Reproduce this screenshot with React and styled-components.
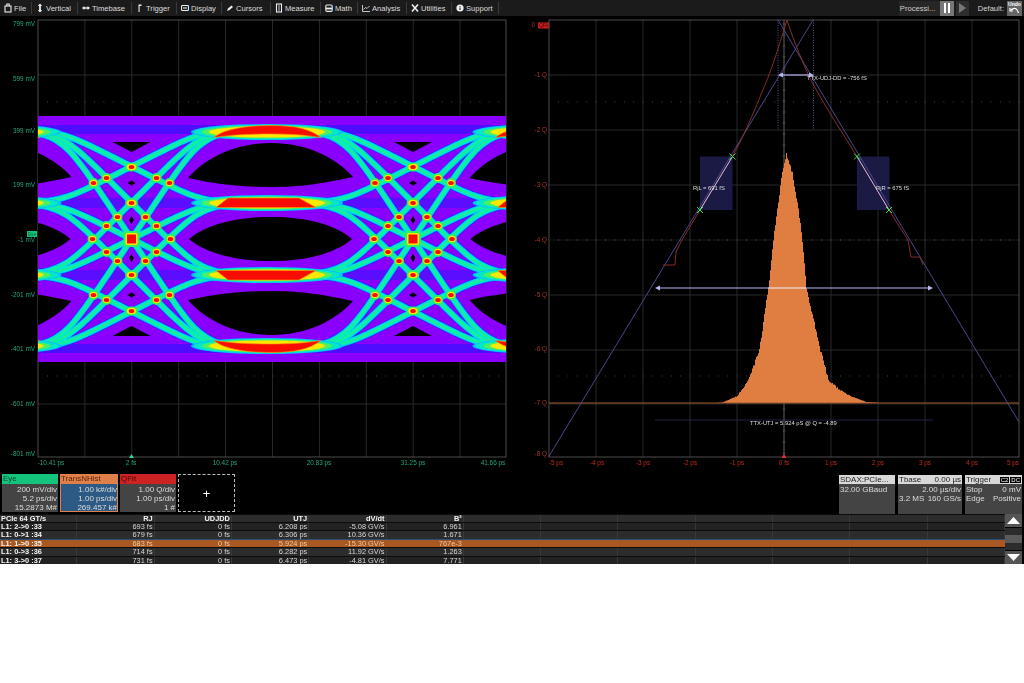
import React from "react";
import styled, { createGlobalStyle } from "styled-components";

const GlobalStyle = createGlobalStyle`
  html, body { margin: 0; padding: 0; background: #fff; }
  body { font-family: "Liberation Sans", Arial, sans-serif; }
`;

const Scope = styled.div`
  width: 1024px;
  height: 564px;
  background: #000;
  display: flex;
  flex-direction: column;
  overflow: hidden;
`;

const Toolbar = styled.div`
  height: 16px;
  background: #1b1b1b;
  display: flex;
  align-items: center;
  color: #dedede;
  font-size: 7.6px;
`;

const Menu = styled.div`
  display: flex;
  align-items: center;
  height: 16px;
`;

const MenuItem = styled.div`
  width: ${(p) => p.$w}px;
  height: 12px;
  box-sizing: border-box;
  display: flex;
  align-items: center;
  gap: 2px;
  padding-left: 4px;
  border-right: 1px solid #3a3a3a;
  white-space: nowrap;
`;

const ToolbarRight = styled.div`
  margin-left: auto;
  display: flex;
  align-items: center;
  height: 16px;
  padding-right: 2px;
`;

const Status = styled.div`
  width: 40px;
  padding-left: 1px;
  height: 15px;
  line-height: 15px;
  background: #262626;
  color: #cfcfcf;
`;

const RunButton = styled.div`
  width: ${(p) => p.$w}px;
  height: 15px;
  margin-right: 2px;
  background: ${(p) => p.$bg};
  display: flex;
  align-items: center;
  justify-content: center;
`;

const DefaultLabel = styled.div`
  margin: 0 3px 0 7px;
  color: #d8d8d8;
`;

const UndoButton = styled.div`
  width: 15px;
  height: 15px;
  background: #666;
  color: #fff;
  font-size: 5px;
  font-weight: bold;
  text-align: center;
  line-height: 6px;
  display: flex;
  flex-direction: column;
  align-items: center;
`;

const Charts = styled.div`
  height: 456px;
  display: flex;
`;

const ChartSvg = styled.svg`
  display: block;
  width: 512px;
  height: 456px;
  font-family: "Liberation Sans", Arial, sans-serif;
`;

const Descriptors = styled.div`
  height: 42px;
  box-sizing: border-box;
  padding-top: 2px;
  display: flex;
  font-size: 8px;
`;

const TraceBoxes = styled.div`
  display: flex;
  gap: 2px;
  padding-left: 2px;
  height: 38px;
`;

const TraceBox = styled.div`
  width: ${(p) => p.$w}px;
  display: flex;
  flex-direction: column;
  background: ${(p) => p.$body || "#444"};
  box-shadow: ${(p) => (p.$body ? `0 0 0 1px ${p.$head} inset` : "none")};
`;

const TraceHead = styled.div`
  height: 10px;
  line-height: 10px;
  padding-left: 1px;
  background: ${(p) => p.$color};
  color: ${(p) => p.$text};
  font-size: 8px;
`;

const TraceLine = styled.div`
  height: 9px;
  line-height: 9px;
  padding-right: 1px;
  margin-top: ${(p) => (p.$first ? 1 : 0)}px;
  text-align: right;
  color: #dcdcdc;
`;

const AddBox = styled.div`
  width: 57px;
  box-sizing: border-box;
  border: 1px dashed #bbb;
  display: flex;
  align-items: center;
  justify-content: center;
  color: #fff;
  font-size: 13px;
`;

const Timing = styled.div`
  margin-left: auto;
  margin-right: 2px;
  display: flex;
  gap: 3px;
  height: 39px;
  margin-top: 1px;
`;

const TimingBox = styled.div`
  width: ${(p) => p.$w}px;
  background: #444;
  color: #dcdcdc;
`;

const TimingHead = styled.div`
  height: 9px;
  line-height: 9px;
  padding: 0 1px;
  display: flex;
  justify-content: space-between;
  align-items: center;
  background: #d8d8d8;
  color: #222;
`;

const TimingLine = styled.div`
  height: 9px;
  line-height: 9px;
  padding: 0 1px;
  display: flex;
  justify-content: ${(p) => p.$align || "space-between"};
  margin-top: ${(p) => (p.$first ? 1 : 0)}px;
`;

const Badge = styled.span`
  background: #000;
  color: #fff;
  font-size: 6px;
  line-height: 7px;
  padding: 0 1px;
  margin-left: 1px;
`;

const TableWrap = styled.div`
  height: 50px;
  display: flex;
  font-size: 7.4px;
`;

const Table = styled.div`
  width: 1005px;
`;

const Row = styled.div`
  display: grid;
  grid-template-columns: repeat(13, 1fr);
  height: ${(p) => p.$h || 8.4}px;
  line-height: ${(p) => p.$h || 8.4}px;
  background: ${(p) => (p.$selected ? "#a85820" : p.$alt ? "#2c2c2c" : "#222")};
  color: ${(p) => (p.$selected ? "#eec9a8" : "#d6d6d6")};
  border-top: 1px solid ${(p) => (p.$selected ? "#28507a" : "#0c0c0c")};
  box-sizing: border-box;
  font-weight: ${(p) => (p.$head ? "bold" : "normal")};
`;

const Cell = styled.div`
  text-align: ${(p) => (p.$name ? "left" : "right")};
  padding: 0 1px;
  color: ${(p) => (p.$name || p.$head ? "#f4f4f4" : "inherit")};
  font-weight: ${(p) => (p.$name ? "bold" : "inherit")};
  border-right: 1px solid ${(p) => (p.$selected ? "transparent" : "#383838")};
  white-space: nowrap;
  overflow: hidden;
`;

const ScrollBar = styled.div`
  width: 17px;
  margin-right: 2px;
  height: 50px;
  background: #222;
  display: flex;
  flex-direction: column;
  align-items: stretch;
`;

const ScrollArrow = styled.div`
  height: 13px;
  background: #555;
  display: flex;
  align-items: center;
  justify-content: center;
`;

const ScrollTrack = styled.div`
  flex: 1;
  display: flex;
  align-items: center;
  background: #2c2c2c;
  border-top: 1px solid #000;
  border-bottom: 1px solid #000;
`;

const ScrollThumb = styled.div`
  width: 100%;
  height: 8px;
  background: #5a5a5a;
`;

// toolbar glyphs, 8x10 box
const Icon = ({ children }) => (
  <svg width="8" height="10" viewBox="0 0 8 10" fill="none" stroke="#eee" strokeWidth="1.1">
    {children}
  </svg>
);

const icons = {
  file: (<><rect x="1" y="3" width="6" height="6" /><path d="M2.8 3V1h2.4v2" /></>),
  vertical: <path d="M4 0.5L6.2 3H4.9V7H6.2L4 9.5 1.8 7H3.1V3H1.8Z" fill="#eee" stroke="none" />,
  timebase: <path d="M0 5L2.4 3V4.3H5.6V3L8 5 5.6 7V5.7H2.4V7Z" fill="#eee" stroke="none" />,
  trigger: <path d="M2.5 9V1.5H5.5V3H3.6V9Z" fill="#eee" stroke="none" />,
  display: (<><rect x="0.5" y="2.5" width="7" height="5" rx="1" /><path d="M2 5H6" /></>),
  cursors: <path d="M1 8L2 5.5 5.5 2.5 7 4 3.5 7Z" fill="#eee" stroke="none" />,
  measure: (<><rect x="1.5" y="1" width="5" height="8" /><path d="M3 3H5M3 5H5M3 7H5" strokeWidth="0.8" /></>),
  math: (<><rect x="0.8" y="2" width="6.4" height="6.4" rx="1.2" /><path d="M1 5.5H7" strokeWidth="1.8" /></>),
  analysis: (<><path d="M0.5 2V8.5H8" strokeWidth="0.8" /><path d="M1.5 6.5L3.5 4.5 5 5.5 7.5 3" strokeWidth="0.8" /></>),
  utilities: <path d="M1 1.5L7 8.5M7 1.5L1 8.5" strokeWidth="1.6" />,
  support: (<><circle cx="4" cy="5" r="3.6" fill="#eee" stroke="none" /><path d="M4 4.4V7M4 3V3.8" stroke="#1b1b1b" strokeWidth="1" /></>),
};

const menu = [
  ["File", "file", 32],
  ["Vertical", "vertical", 46],
  ["Timebase", "timebase", 54],
  ["Trigger", "trigger", 45],
  ["Display", "display", 45],
  ["Cursors", "cursors", 49],
  ["Measure", "measure", 50],
  ["Math", "math", 37],
  ["Analysis", "analysis", 49],
  ["Utilities", "utilities", 45],
  ["Support", "support", 47],
];

const HLINES = [20, 75, 130, 185, 240, 295, 350, 404, 457];

function Grid({ x0, x1, step, color = "#2e2e2e", border = "#555" }) {
  const verts = [];
  for (let x = x0 + step; x < x1 - 2; x += step) verts.push(x);
  const dots = [];
  for (let x = x0 + 9; x < x1; x += 9.4) dots.push(x);
  return (
    <g>
      {verts.map((x) => (
        <line key={x} x1={x} x2={x} y1={20} y2={457} stroke={color} strokeWidth="0.9" />
      ))}
      {HLINES.slice(1, -1).map((y) => (
        <line key={y} x1={x0} x2={x1} y1={y} y2={y} stroke={y === 240 ? "#1c1c1c" : color} strokeWidth="0.9" />
      ))}
      {[102, 240, 376].map((y) =>
        dots.map((x) => (
          <rect key={y + "-" + x} x={x} y={y - 0.5} width="1" height="1" fill={y === 240 ? "#5c5c5c" : "#444"} />
        ))
      )}
      <rect x={x0} y={20} width={x1 - x0} height={437} fill="none" stroke={border} strokeWidth="0.9" />
    </g>
  );
}

// eye diagram: every level-to-level transition around each crossing
const LEVELS = [130, 203, 275, 348];
const UI = 281.5;
const CROSSES = [-150, 131.5, 413, 694.5];

// nearly straight through the crossing, then a soft bend on to the level
function settle(t) {
  const u = Math.abs(t);
  const a = 1.95 * u;
  const b = 0.97 + 0.03 * Math.sin((Math.max(0, u - 0.5) / 0.5) * (Math.PI / 2));
  const s = 7;
  return Math.sign(t) * (-Math.log(Math.exp(-s * a) + Math.exp(-s * b)) / s);
}

function transition(a, b, cx) {
  const pts = [];
  for (let i = -40; i <= 40; i++) {
    const t = i / 40;
    const y = (a + b) / 2 + ((b - a) / 2) * settle(t);
    pts.push(`${(cx + (t * UI) / 2).toFixed(1)} ${y.toFixed(1)}`);
  }
  return "M" + pts.join("L");
}

const edgePaths = [];
CROSSES.forEach((cx) =>
  LEVELS.forEach((a) =>
    LEVELS.forEach((b) => {
      if (a !== b) edgePaths.push(transition(a, b, cx));
    })
  )
);
const edges = edgePaths.join(" ");

const edgeLayers = [
  ["#2a20ff", 7.6],
  ["#00b4ff", 6.4],
  ["#00e8d0", 5],
  ["#18f090", 2],
];

const nodeOffsets = [
  [0, -72], [0, -36], [0, 36], [0, 72],
  [-25, -61], [25, -61], [-38, -56], [38, -56],
  [-14, -22], [14, -22], [-25, -13], [25, -13],
  [-14, 22], [14, 22], [-25, 13], [25, 13],
  [-25, 61], [25, 61], [-38, 56], [38, 56],
  [-39, 0], [39, 0],
];

const TOP_BAR = "M214 137.500C225 128 250 125.500 272 125.500C295 125.500 310 129 321 137.500C305 135 290 134 270 134C250 134 230 135 214 137.500Z";
const MID_BAR = "M216 207.500L228 198H299L316 207.500Z";

// the three eye openings, left to right tips one unit interval apart
const TOP_EYE = "M188 178C205 158 235 143 271 143C308 143 336 158 353 177C320 184 300 187 271 187C240 187 215 184 188 178Z";
const MID_EYE = "M189 239C205 225 235 217 271 217C308 217 336 225 352 239C336 253 308 261 271 261C235 261 205 253 189 239Z";

function LevelBar({ d, y }) {
  return (
    <g>
      <ellipse cx="267" cy={y} rx="76" ry="8" fill="#00c0ff" />
      <ellipse cx="267" cy={y} rx="73" ry="7.2" fill="#00e8c8" />
      <ellipse cx="267" cy={y} rx="65" ry="6.4" fill="#50f060" />
      <ellipse cx="267" cy={y} rx="58" ry="5.6" fill="#ffe800" />
      <path d={d} fill="#f81000" stroke="#ff9000" strokeWidth="0.6" strokeLinejoin="round" />
    </g>
  );
}

const Hole = ({ cx, y, rx, ry }) => (
  <path d={`M${cx - rx} ${y}L${cx} ${y - ry}L${cx + rx} ${y}L${cx} ${y + ry}Z`} fill="#000" />
);

function EyePattern() {
  return (
    <svg x="38" y="20" width="468" height="437" viewBox="38 20 468 437">
      <defs>
        <filter id="soft" x="-5%" y="-5%" width="110%" height="110%">
          <feGaussianBlur stdDeviation="0.6" />
        </filter>
      </defs>
      <g filter="url(#soft)">
        <rect x="30" y="116" width="490" height="246" fill="#8a00ff" />
        <rect x="30" y="125" width="490" height="9" fill="#5010ff" />
        <rect x="30" y="344" width="490" height="9" fill="#5010ff" />
        <rect x="30" y="198" width="490" height="10" fill="#5a08ff" />
        <rect x="30" y="270" width="490" height="10" fill="#5a08ff" />
        {[-281.5, 0, 281.5].map((dx) => (
          <g key={dx} transform={`translate(${dx} 0)`}>
            <path d={TOP_EYE} fill="#000" />
            <path d={MID_EYE} fill="#000" />
            <path d={TOP_EYE} fill="#000" transform="translate(0 478) scale(1 -1)" />
          </g>
        ))}
        {[131.5, 413].map((cx) => (
          <g key={cx}>
            <path d={`M${cx - 19} 142H${cx + 19}L${cx} 152Z`} fill="#000" />
            <path d={`M${cx - 19} 336H${cx + 19}L${cx} 326Z`} fill="#000" />
            <Hole cx={cx} y={183} rx={4} ry={2.4} />
            <Hole cx={cx} y={295} rx={4} ry={2.4} />
            <Hole cx={cx} y={220} rx={2.4} ry={4} />
            <Hole cx={cx} y={258} rx={2.4} ry={4} />
          </g>
        ))}
        {edgeLayers.map(([color, w]) => (
          <path key={color} d={edges} fill="none" stroke={color} strokeWidth={w} />
        ))}
        {[-281.5, 0, 281.5].map((dx) => (
          <g key={dx} transform={`translate(${dx} 0)`}>
            <LevelBar d={TOP_BAR} y={132} />
            <LevelBar d={MID_BAR} y={203} />
            <g transform="translate(0 478) scale(1 -1)">
              <LevelBar d={TOP_BAR} y={132} />
              <LevelBar d={MID_BAR} y={203} />
            </g>
          </g>
        ))}
        {[131.5, 413].map((cx) => (
          <g key={cx}>
            {nodeOffsets.map(([dx, dy]) => (
              <g key={dx + "," + dy}>
                <ellipse cx={cx + dx} cy={239 + dy} rx={dx === 0 ? 6.4 : 5} ry={dx === 0 && Math.abs(dy) === 72 ? 4.5 : 5} fill="#30ee60" />
                <ellipse cx={cx + dx} cy={239 + dy} rx={dx === 0 ? 4.6 : 3.6} ry={3.2} fill="#ffe800" />
                <ellipse cx={cx + dx} cy={239 + dy} rx="2.8" ry="2" fill="#f81000" />
              </g>
            ))}
            <rect x={cx - 8} y={231} width={16} height={16} fill="#30ee60" rx="3" />
            <rect x={cx - 6} y={233} width={12} height={12} fill="#ffe800" rx="2" />
            <rect x={cx - 4.5} y={234.500} width={9} height={9} fill="#f81000" />
          </g>
        ))}
      </g>
    </svg>
  );
}

const yLabels = [
  ["799 mV", 26], ["599 mV", 81], ["399 mV", 133], ["199 mV", 187], ["-1 mV", 242],
  ["-201 mV", 297], ["-401 mV", 351], ["-601 mV", 406], ["-801 mV", 456],
];
const xLabels = [
  ["-10.41 ps", 51], ["2 fs", 131], ["10.42 ps", 225], ["20.83 ps", 319], ["31.25 ps", 413], ["41.66 ps", 493],
];

function EyeChart() {
  return (
    <ChartSvg viewBox="0 16 512 456">
      <Grid x0={38} x1={506} step={46.9} />
      <EyePattern />
      {yLabels.map(([t, y]) => (
        <text key={t} x="35" y={y} fontSize="6.4" fill="#22a87a" textAnchor="end">{t}</text>
      ))}
      {xLabels.map(([t, x]) => (
        <text key={t} x={x} y="465" fontSize="6.4" fill="#22a87a" textAnchor="middle">{t}</text>
      ))}
      <path d="M131.5 454L134 458H129Z" fill="#2fd49a" />
      <rect x="27" y="231" width="10" height="6" fill="#14c47c" />
      <text x="32" y="236" fontSize="4.6" fill="#063" textAnchor="middle">Eye</text>
    </ChartSvg>
  );
}

// histogram outline, px column -> top y
const histProfile = [
  [715, 403], [722, 402.5], [737, 396], [748, 380], [759, 350], [768, 288], [773, 240], [777, 210],
  [782, 172], [786, 155], [788, 162], [792, 172], [798, 210], [802, 240], [806, 288], [820, 350],
  [828, 380], [838, 389], [850, 396], [866, 402], [880, 403],
];

function histTop(x) {
  for (let i = 1; i < histProfile.length; i++) {
    const [x0, y0] = histProfile[i - 1];
    const [x1, y1] = histProfile[i];
    if (x <= x1) {
      const y = y0 + ((y1 - y0) * (x - x0)) / (x1 - x0);
      const jitter = Math.sin(x * 12.9898) * 43758.5453;
      const n = jitter - Math.floor(jitter) - 0.5;
      return Math.min(403, y + n * Math.min(4, (403 - y) * 0.12));
    }
  }
  return 403;
}

function histPath() {
  let d = "M715 403";
  for (let x = 715; x < 880; x += 1) {
    d += `V${histTop(x).toFixed(1)}H${x + 1}`;
  }
  return d + "V403Z";
}

const qLabels = [
  ["0", 27], ["-1 Q", 77], ["-2 Q", 132], ["-3 Q", 187], ["-4 Q", 242], ["-5 Q", 297], ["-6 Q", 351], ["-7 Q", 405], ["-8 Q", 456],
];
const psLabels = [
  ["-5 ps", 556], ["-4 ps", 597], ["-3 ps", 643], ["-2 ps", 690], ["-1 ps", 737], ["0 fs", 784],
  ["1 ps", 831], ["2 ps", 878], ["3 ps", 925], ["4 ps", 972], ["5 ps", 1013],
];

const Cross = ({ x, y }) => (
  <path d={`M${x - 3} ${y - 3}L${x + 3} ${y + 3}M${x + 3} ${y - 3}L${x - 3} ${y + 3}`} stroke="#3ce04a" strokeWidth="1" />
);

function QFitChart() {
  const ticks = [];
  for (let y = 24; y < 457; y += 11) ticks.push(y);
  return (
    <ChartSvg viewBox="512 16 512 456">
      <Grid x0={549} x1={1019} step={47} />
      <line x1="784" x2="784" y1="20" y2="457" stroke="#555" strokeWidth="0.9" />
      {ticks.map((y) => (
        <line key={y} x1="782.5" x2="785.5" y1={y} y2={y} stroke="#666" strokeWidth="0.6" />
      ))}
      <rect x="700" y="156.5" width="32.5" height="53.5" fill="#1a1a44" />
      <rect x="857" y="156.5" width="32.5" height="53.5" fill="#1a1a44" />
      <line x1="778" x2="778" y1="20" y2="130" stroke="#7878c0" strokeWidth="0.7" strokeDasharray="1 1.5" />
      <line x1="813.5" x2="813.5" y1="20" y2="130" stroke="#7878c0" strokeWidth="0.7" strokeDasharray="1 1.5" />
      <path d={histPath()} fill="#e07d40" />
      <line x1="549" x2="1019" y1="403" y2="403" stroke="#a55c30" strokeWidth="1" />
      <path d="M813 20L548.5 457" stroke="#50509c" strokeWidth="0.9" fill="none" />
      <path d="M778 20L1019 422" stroke="#50509c" strokeWidth="0.9" fill="none" />
      <path
        d="M787 20C782 36 772 70 762 92C754 112 744 136 732.5 156.5L700 210L682 240L676 252L675 265H663"
        stroke="#963030" strokeWidth="0.9" fill="none"
      />
      <path
        d="M787 20C792 36 803 65 813 84C826 108 842 132 857 156.5L889 210L897 223L908 240L911 257H920L923 265"
        stroke="#963030" strokeWidth="0.9" fill="none"
      />
      <path d="M732.5 156.5L700 210M857 156.5L889 210" stroke="#d8c8e8" strokeWidth="0.9" />
      <Cross x={732.5} y={156.5} />
      <Cross x={700} y={210} />
      <Cross x={857} y={156.5} />
      <Cross x={889} y={210} />
      <line x1="780" x2="812" y1="75" y2="75" stroke="#b8b8f0" strokeWidth="1.2" />
      <path d="M778 75L783 72.5V77.5ZM814 75L809 72.5V77.5Z" fill="#b8b8f0" />
      <line x1="657" x2="931" y1="288" y2="288" stroke="#b8b8f0" strokeWidth="1" />
      <line x1="768" x2="806" y1="288" y2="288" stroke="#ffd8b0" strokeWidth="1.2" />
      <path d="M655 288L660 285.5V290.5ZM933 288L928 285.5V290.5Z" fill="#b8b8f0" />
      <line x1="655" x2="933" y1="420" y2="420" stroke="#24244c" strokeWidth="0.9" />
      <text x="807" y="80" fontSize="5.8" fill="#ddd">TTX-UDJ-DD = -756 fS</text>
      <text x="693" y="190" fontSize="5.8" fill="#ddd">RjL = 691 fS</text>
      <text x="876" y="190" fontSize="5.8" fill="#ddd">RjR = 675 fS</text>
      <text x="750" y="425" fontSize="5.8" fill="#ddd">TTX-UTJ = 5.924 pS @ Q = -4.89</text>
      {qLabels.map(([t, y]) => (
        <text key={t} x={t === "0" ? 535 : 547} y={y} fontSize="6.4" fill="#a8322a" textAnchor="end">{t}</text>
      ))}
      {psLabels.map(([t, x]) => (
        <text key={t} x={x} y="465" fontSize="6.4" fill="#c02a22" textAnchor="middle">{t}</text>
      ))}
      <path d="M784 454L786.5 458H781.5Z" fill="#e03030" />
      <rect x="538" y="22.5" width="11" height="6" fill="#c82020" />
      <text x="543.5" y="27.3" fontSize="4.6" fill="#400" textAnchor="middle">QFit</text>
    </ChartSvg>
  );
}

const traces = [
  { name: "Eye", w: 56, head: "#14c47c", text: "#0a4a30", lines: ["200 mV/div", "5.2 ps/div", "15.2873 M#"] },
  { name: "TransNHist", w: 58, head: "#e07f4a", text: "#5a2408", body: "#2d5a84", lines: ["1.00 k#/div", "1.00 ps/div", "269.457 k#"] },
  { name: "QFit", w: 56, head: "#cc2222", text: "#4a0a0a", lines: ["1.00 Q/div", "1.00 ps/div", "1 #"] },
];

const columns = ["PCIe 64 GT/s", "RJ", "UDJDD", "UTJ", "dV/dt", "B²"];
const rows = [
  ["L1: 2->0 :33", "693 fs", "0 fs", "6.208 ps", "-5.08 GV/s", "6.961"],
  ["L1: 0->1 :34", "679 fs", "0 fs", "6.306 ps", "10.36 GV/s", "1.671"],
  ["L1: 1->0 :35", "683 fs", "0 fs", "5.924 ps", "-15.30 GV/s", "767e-3"],
  ["L1: 0->3 :36", "714 fs", "0 fs", "6.282 ps", "11.92 GV/s", "1.263"],
  ["L1: 3->0 :37", "731 fs", "0 fs", "6.473 ps", "-4.81 GV/s", "7.771"],
];
const fill = (cells) => [...cells, ...Array(13 - cells.length).fill("")];

export default function App() {
  return (
    <>
      <GlobalStyle />
      <Scope>
        <Toolbar>
          <Menu>
            {menu.map(([label, icon, w]) => (
              <MenuItem key={label} $w={w}>
                <Icon>{icons[icon]}</Icon>
                {label}
              </MenuItem>
            ))}
          </Menu>
          <ToolbarRight>
            <Status>Processi...</Status>
            <RunButton $w={14} $bg="#777">
              <svg width="8" height="10" viewBox="0 0 8 10"><path d="M1 0H3V10H1ZM5 0H7V10H5Z" fill="#fff" /></svg>
            </RunButton>
            <RunButton $w={13} $bg="#2e2e2e">
              <svg width="8" height="10" viewBox="0 0 8 10"><path d="M1 0L8 5 1 10Z" fill="#777" /></svg>
            </RunButton>
            <DefaultLabel>Default:</DefaultLabel>
            <UndoButton>
              Undo
              <svg width="11" height="7" viewBox="0 0 11 7" fill="none" stroke="#fff" strokeWidth="1.2">
                <path d="M2 3C5 0 8 1 9.500 6M1 1V4H4" />
              </svg>
            </UndoButton>
          </ToolbarRight>
        </Toolbar>
        <Charts>
          <EyeChart />
          <QFitChart />
        </Charts>
        <Descriptors>
          <TraceBoxes>
            {traces.map((t) => (
              <TraceBox key={t.name} $w={t.w} $body={t.body} $head={t.head}>
                <TraceHead $color={t.head} $text={t.text}>{t.name}</TraceHead>
                {t.lines.map((l, i) => (
                  <TraceLine key={l} $first={i === 0}>{l}</TraceLine>
                ))}
              </TraceBox>
            ))}
            <AddBox>+</AddBox>
          </TraceBoxes>
          <Timing>
            <TimingBox $w={56}>
              <TimingHead>SDAX:PCIe...</TimingHead>
              <TimingLine $first>32.00 GBaud</TimingLine>
            </TimingBox>
            <TimingBox $w={64}>
              <TimingHead><span>Tbase</span><span>0.00 µs</span></TimingHead>
              <TimingLine $first $align="flex-end">2.00 µs/div</TimingLine>
              <TimingLine><span>3.2 MS</span><span>160 GS/s</span></TimingLine>
            </TimingBox>
            <TimingBox $w={57}>
              <TimingHead><span>Trigger</span><span><Badge>C2</Badge><Badge>DC</Badge></span></TimingHead>
              <TimingLine $first><span>Stop</span><span>0 mV</span></TimingLine>
              <TimingLine><span>Edge</span><span>Positive</span></TimingLine>
            </TimingBox>
          </Timing>
        </Descriptors>
        <TableWrap>
          <Table>
            <Row $h={8} $head $alt>
              {fill(columns).map((c, i) => (
                <Cell key={i} $name={i === 0} $head>{c}</Cell>
              ))}
            </Row>
            {rows.map((r, ri) => (
              <Row key={r[0]} $alt={ri % 2 === 1} $selected={ri === 2}>
                {fill(r).map((c, i) => (
                  <Cell key={i} $name={i === 0} $selected={ri === 2}>{c}</Cell>
                ))}
              </Row>
            ))}
          </Table>
          <ScrollBar>
            <ScrollArrow>
              <svg width="13" height="7" viewBox="0 0 13 7"><path d="M6.500 0L13 7H0Z" fill="#fff" /></svg>
            </ScrollArrow>
            <ScrollTrack><ScrollThumb /></ScrollTrack>
            <ScrollArrow>
              <svg width="13" height="7" viewBox="0 0 13 7"><path d="M6.500 7L13 0H0Z" fill="#fff" /></svg>
            </ScrollArrow>
          </ScrollBar>
        </TableWrap>
      </Scope>
    </>
  );
}
